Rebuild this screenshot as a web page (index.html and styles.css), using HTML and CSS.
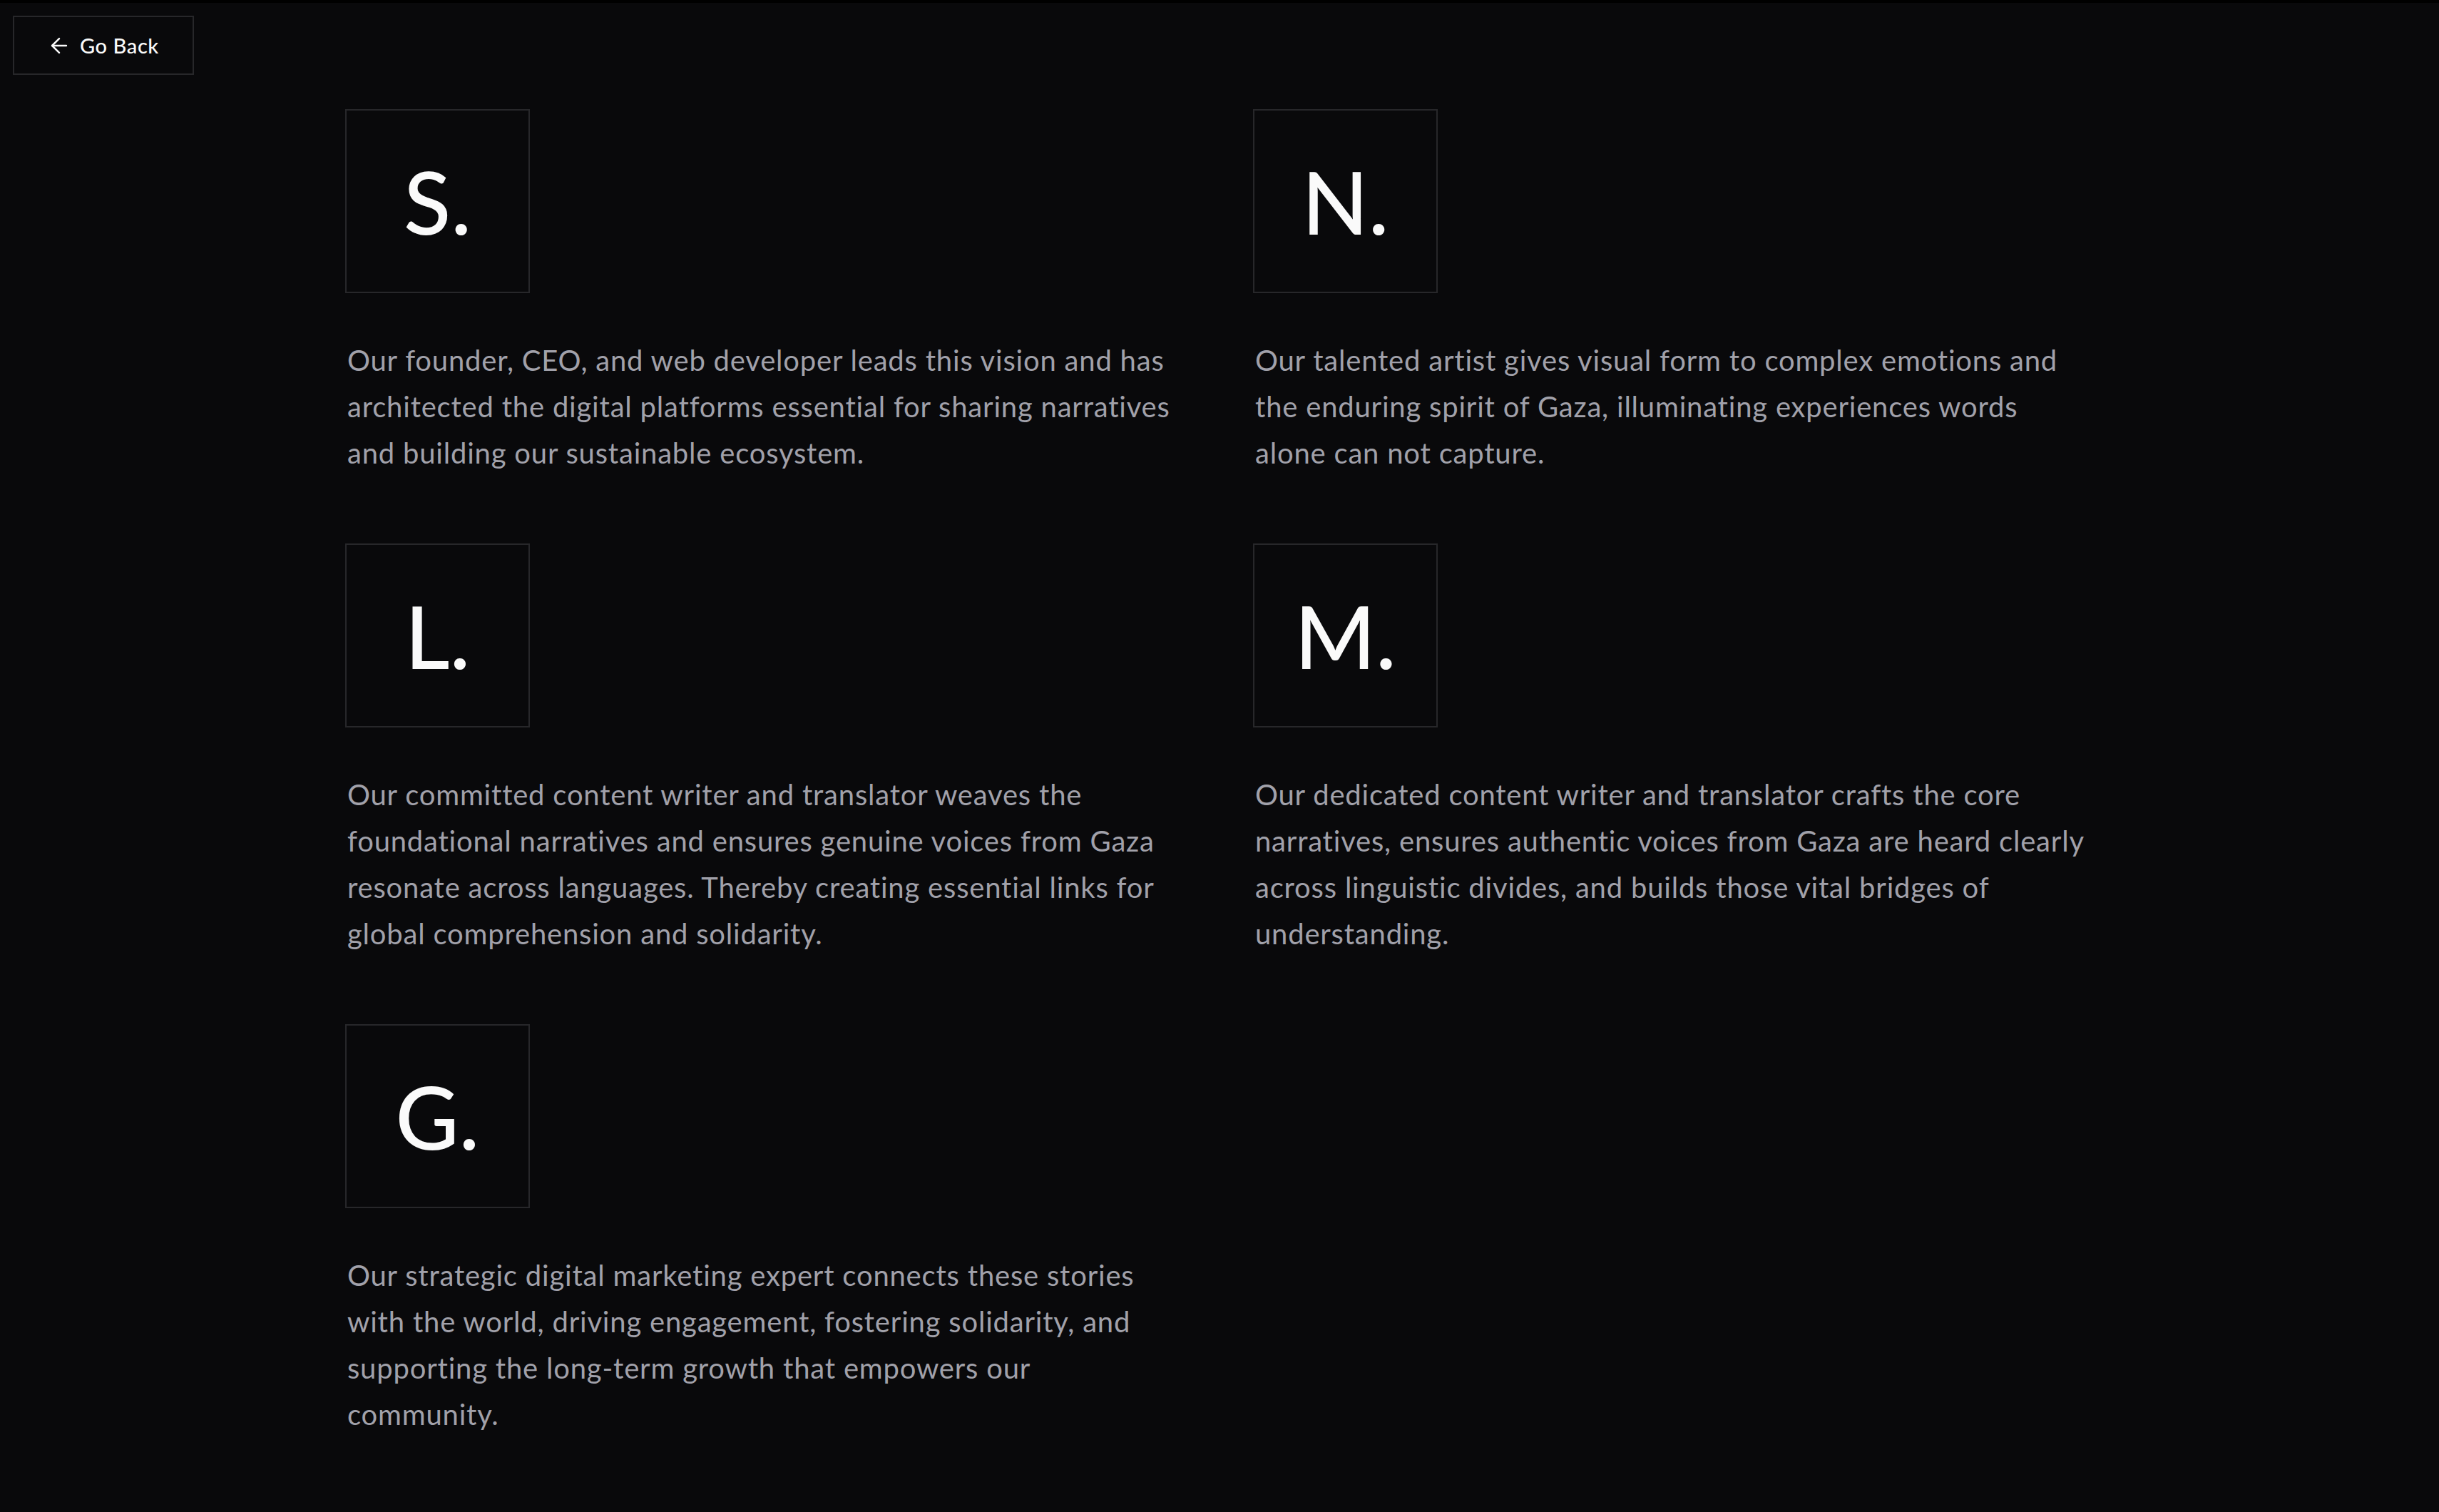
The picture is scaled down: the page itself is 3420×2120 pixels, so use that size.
FILE: index.html
```html
<!DOCTYPE html>
<html lang="en">
<head>
<meta charset="utf-8">
<title>Team</title>
<link rel="stylesheet" href="styles.css">
</head>
<body>
<header class="topbar">
  <a class="back-btn" href="#">
    <svg class="back-icon" viewBox="0 0 24 24" fill="none" stroke="currentColor" stroke-width="1.75" stroke-linecap="round" stroke-linejoin="round"><path d="m12 19-7-7 7-7"/><path d="M19 12H5"/></svg>
    <span>Go Back</span>
  </a>
</header>
<main class="team">
  <article class="member">
    <div class="initial"><span>S.</span></div>
    <p class="bio">Our founder, CEO, and web developer leads this vision and has architected the digital platforms essential for sharing narratives and building our sustainable ecosystem.</p>
  </article>
  <article class="member">
    <div class="initial"><span>N.</span></div>
    <p class="bio">Our talented artist gives visual form to complex emotions and the enduring spirit of Gaza, illuminating experiences words alone can not capture.</p>
  </article>
  <article class="member">
    <div class="initial"><span>L.</span></div>
    <p class="bio">Our committed content writer and translator weaves the foundational narratives and ensures genuine voices from Gaza resonate across languages. Thereby creating essential links for global comprehension and solidarity.</p>
  </article>
  <article class="member">
    <div class="initial"><span>M.</span></div>
    <p class="bio">Our dedicated content writer and translator crafts the core narratives, ensures authentic voices from Gaza are heard clearly across linguistic divides, and builds those vital bridges of understanding.</p>
  </article>
  <article class="member">
    <div class="initial"><span>G.</span></div>
    <p class="bio">Our strategic digital marketing expert connects these stories with the world, driving engagement, fostering solidarity, and supporting the long-term growth that empowers our community.</p>
  </article>
</main>
</body>
</html>
```

FILE: styles.css
```css
* { box-sizing: border-box; }

html, body {
  margin: 0;
  padding: 0;
  background: #09090b;
}

body {
  min-height: 2120px;
  border-top: 4px solid #000;
  font-family: Lato, "Noto Sans", sans-serif;
  color: #a1a1aa;
}

.topbar {
  padding: 18px 0 0 18px;
  display: flex;
}

.back-btn {
  display: flex;
  align-items: center;
  gap: 12px;
  width: 254px;
  height: 83px;
  padding: 0 0 0 46px;
  border: 2px solid #27272a;
  color: #fafafa;
  text-decoration: none;
  font-size: 29px;
  font-weight: 500;
  letter-spacing: 0.6px;
}

.back-icon {
  width: 34px;
  height: 34px;
  flex: none;
}

.team {
  width: 2452px;
  margin: 48px auto 0;
  display: grid;
  grid-template-columns: 1fr 1fr;
  column-gap: 94px;
  row-gap: 94px;
  padding-bottom: 96px;
}

.member {
  display: flex;
  flex-direction: column;
  align-items: flex-start;
}

.initial {
  width: 259px;
  height: 258px;
  border: 2px solid #27272a;
  display: flex;
  align-items: center;
  justify-content: center;
  color: #fafafa;
  font-size: 122px;
  font-weight: 500;
  line-height: 1;
}

.bio {
  margin: 62px 0 0 3px;
  font-size: 40px;
  line-height: 65px;
  letter-spacing: 0.8px;
  color: #a1a1aa;
}
```
